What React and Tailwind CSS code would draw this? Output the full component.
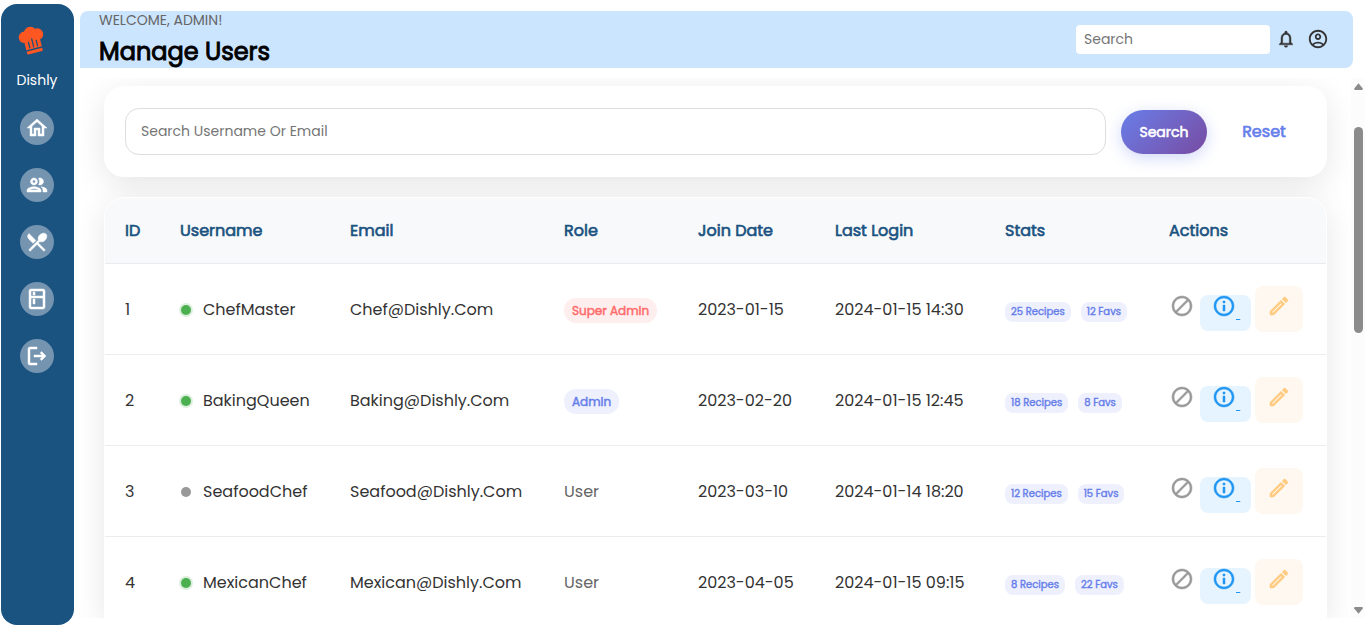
import React from "react";
import {
  MdOutlineHome,
  MdOutlineGroup,
  MdRestaurantMenu,
  MdOutlineKitchen,
  MdNotificationsNone,
  MdOutlineAccountCircle,
  MdBlock,
  MdInfoOutline,
  MdOutlineEdit,
} from "react-icons/md";

function LogoutIcon({ className }) {
  return (
    <svg viewBox="0 0 24 24" fill="currentColor" stroke="currentColor" strokeWidth="0.5" className={className} aria-hidden="true">
      <path d="M5 21Q3 21 3 19V5Q3 3 5 3H12V5H5V19H12V21ZM16.6 16.4 15.2 15 17.2 13H9V11H17.2L15.2 9 16.6 7.6 21 12Z" />
    </svg>
  );
}

const NAV = [
  { label: "Home", Icon: MdOutlineHome },
  { label: "Users", Icon: MdOutlineGroup },
  { label: "Recipes", Icon: MdRestaurantMenu },
  { label: "Pantry", Icon: MdOutlineKitchen },
  { label: "Log out", Icon: LogoutIcon },
];

const USERS = [
  { id: 1, name: "ChefMaster", email: "Chef@Dishly.Com", role: "Super Admin", joined: "2023-01-15", login: "2024-01-15 14:30", recipes: 25, favs: 12, online: true },
  { id: 2, name: "BakingQueen", email: "Baking@Dishly.Com", role: "Admin", joined: "2023-02-20", login: "2024-01-15 12:45", recipes: 18, favs: 8, online: true },
  { id: 3, name: "SeafoodChef", email: "Seafood@Dishly.Com", role: "User", joined: "2023-03-10", login: "2024-01-14 18:20", recipes: 12, favs: 15, online: false },
  { id: 4, name: "MexicanChef", email: "Mexican@Dishly.Com", role: "User", joined: "2023-04-05", login: "2024-01-15 09:15", recipes: 8, favs: 22, online: true },
];

const COLUMNS = [
  { title: "ID", width: "w-[55px]" },
  { title: "Username", width: "w-[170px]" },
  { title: "Email", width: "w-[214px]" },
  { title: "Role", width: "w-[134px]" },
  { title: "Join Date", width: "w-[137px]" },
  { title: "Last Login", width: "w-[170px]" },
  { title: "Stats", width: "w-[164px]" },
  { title: "Actions", width: "w-[177px]" },
];

// Emphasis is drawn as a thin outline around the regular weight.
const STRONG = "font-normal [-webkit-text-stroke:0.04em_currentColor]";

// Thickens a Material icon, leaving out its empty bounding path.
const BOLD_ICON = "stroke-[0.5] [&>path[fill=none]]:stroke-none";

const ROLE_STYLES = {
  "Super Admin": `mt-0.5 inline-block rounded-xl bg-[#ffeeee] px-2 text-xs leading-[25px] text-[#ff6b6b] ${STRONG}`,
  Admin: `mt-0.5 inline-block rounded-xl bg-[#eef0fd] px-2 text-xs leading-[25px] text-[#667eea] ${STRONG}`,
  User: "text-[#666]",
};

function ChefHat() {
  return (
    <svg viewBox="0 0 32 32" className="size-8" aria-hidden="true">
      <g transform="rotate(-14 16 16)">
        <path
          fill="#ff5722"
          d="M8 24.5V17.2A5.9 5.9 0 0 1 3.6 11.6A5.8 5.8 0 0 1 10.3 5.9A6.6 6.6 0 0 1 21.7 5.9A5.8 5.8 0 0 1 28.4 11.6A5.9 5.9 0 0 1 24 17.2V24.5Z"
        />
        <path fill="#ff5722" d="M8 26H24V28.2Q24 29.2 23 29.2H9Q8 29.2 8 28.2Z" />
        <path stroke="#1a5280" strokeWidth="1.3" strokeLinecap="round" d="M12 17.5V23M16 14.8V23M20 17.5V23" />
      </g>
    </svg>
  );
}

function Sidebar() {
  return (
    <aside className="mt-1 mb-1.5 ml-px flex w-[73px] shrink-0 flex-col items-center rounded-2xl bg-[#1a5280] pt-5 pr-px">
      <a href="#dishly" className="flex flex-col items-center">
        <span className="-ml-2.5">
          <ChefHat />
        </span>
        <span className="mt-3 text-sm leading-6 text-white">Dishly</span>
      </a>
      <nav className="mt-[19px] flex flex-col gap-[23px]">
        {NAV.map(({ label, Icon }) => (
          <a
            key={label}
            href="#nav"
            aria-label={label}
            className="flex size-[34px] items-center justify-center rounded-full bg-[#7494b0] text-white"
          >
            <Icon className={`size-6 ${BOLD_ICON}`} />
          </a>
        ))}
      </nav>
    </aside>
  );
}

function Header() {
  return (
    <header className="mt-[11px] mr-3 flex h-[57px] shrink-0 items-center justify-between rounded-lg rounded-bl-none bg-[#cce5ff] pr-6 pl-[19px]">
      <div className="flex flex-col self-start">
        <p className="text-sm leading-[18px] text-[#666]">WELCOME, ADMIN!</p>
        <h1 className={`text-2xl leading-[46px] text-black ${STRONG}`}>Manage Users</h1>
      </div>
      <div className="flex items-center gap-1.5 pb-px">
        <input
          type="search"
          aria-label="Search"
          placeholder="Search"
          className="h-[29px] w-[194px] rounded bg-white px-2 text-sm text-[#333] outline-none placeholder:text-[#757575]"
        />
        <button type="button" aria-label="Notifications" className="text-[#333]">
          <MdNotificationsNone className={`size-5 ${BOLD_ICON}`} />
        </button>
        <button type="button" aria-label="Account" className="ml-[5px] text-[#333]">
          <MdOutlineAccountCircle className="size-[22px]" />
        </button>
      </div>
    </header>
  );
}

function SearchCard() {
  return (
    <form
      className="flex items-center gap-[15px] rounded-[20px] bg-white px-[21px] py-[22px] shadow-[0_8px_32px_rgba(0,0,0,0.1)]"
      onSubmit={(event) => event.preventDefault()}
    >
      <input
        type="text"
        aria-label="Search username or email"
        placeholder="Search Username Or Email"
        className="h-[47px] min-w-0 flex-1 rounded-[14px] border border-[#ddd] bg-white px-[15px] text-sm text-[#333] outline-none placeholder:text-[#757575]"
      />
      <button
        type="submit"
        className={`h-11 w-[86px] rounded-full bg-linear-135 from-[#667eea] to-[#764ba2] text-sm text-white shadow-[0_4px_15px_rgba(102,126,234,0.3)] ${STRONG}`}
      >
        Search
      </button>
      <a href="#reset" className={`w-[84px] text-center text-base text-[#667eea] ${STRONG}`}>
        Reset
      </a>
    </form>
  );
}

function UserRow({ user }) {
  const chip = `rounded-lg bg-[#eef0fd] px-1.5 text-[10px] leading-5 whitespace-nowrap text-[#667eea] ${STRONG}`;
  const cell = "pt-0.5 pl-5";
  return (
    <tr className="h-[91px] border-b border-[#ececec] whitespace-nowrap">
      <td className={cell}>{user.id}</td>
      <td className={cell}>
        <span className="flex items-center gap-3">
          <span
            className={
              user.online
                ? "ml-px size-2.5 rounded-full bg-[#4caf50] shadow-[0_0_0_2px_rgba(76,175,80,0.2)]"
                : "ml-px size-2.5 rounded-full bg-[#999]"
            }
          />
          {user.name}
        </span>
      </td>
      <td className={cell}>{user.email}</td>
      <td className={cell}>
        <span className={ROLE_STYLES[user.role]}>{user.role}</span>
      </td>
      <td className={cell}>{user.joined}</td>
      <td className={cell}>{user.login}</td>
      <td className="pt-1.5 pl-5">
        <span className="flex gap-2.5">
          <span className={chip}>{user.recipes} Recipes</span>
          <span className={chip}>{user.favs} Favs</span>
        </span>
      </td>
      <td className="pl-5">
        <div className="flex items-start gap-1">
          <button type="button" aria-label={`Block ${user.name}`} className="mt-2 mr-0.5 flex w-[25px] justify-center text-[#999]">
            <MdBlock className={`size-6 ${BOLD_ICON}`} />
          </button>
          <a
            href="#details"
            aria-label={`Details of ${user.name}`}
            className="mt-[9px] flex h-9 items-start rounded-lg bg-[#e6f4ff] pr-[11px] pl-3 text-[#2196f3]"
          >
            <MdInfoOutline className={`-mt-px size-6 ${BOLD_ICON}`} />
            <span className="leading-9 whitespace-pre underline"> </span>
          </a>
          <button
            type="button"
            aria-label={`Edit ${user.name}`}
            className="flex h-[46px] w-12 items-start justify-center rounded-lg bg-[#fff8f0] pt-2 text-[#ffcb80]"
          >
            <MdOutlineEdit className={`size-6 ${BOLD_ICON}`} />
          </button>
        </div>
      </td>
    </tr>
  );
}

function UsersTable() {
  return (
    <div className="overflow-hidden rounded-t-[20px] border border-white bg-white shadow-[0_8px_32px_rgba(0,0,0,0.1)]">
      <table className="w-full table-fixed border-collapse text-left text-base text-[#333]">
        <thead>
          <tr className="h-[65px] border-b border-[#e9ecef] bg-[#f8f9fb] text-[#1a5280]">
            {COLUMNS.map(({ title, width }) => (
              <th key={title} scope="col" className={`${width} pt-0.5 pl-5 ${STRONG}`}>
                {title}
              </th>
            ))}
          </tr>
        </thead>
        <tbody>
          {USERS.map((user) => (
            <UserRow key={user.id} user={user} />
          ))}
        </tbody>
      </table>
    </div>
  );
}

function ScrollTrack() {
  return (
    <div className="flex w-3.5 shrink-0 flex-col items-center bg-[#fcfcfc] pt-[5px] pb-1" aria-hidden="true">
      <svg viewBox="0 0 9 7" className="h-[7px] w-[9px] fill-[#8b8b8b]">
        <path d="M4.5 0.3 8.8 5.6Q9 7 8 7H1Q0 7 0.2 5.6Z" />
      </svg>
      <div className="mt-[37px] h-[206px] w-[9px] rounded-full bg-[#8b8b8b]" />
      <svg viewBox="0 0 9 7" className="mt-auto h-[7px] w-[9px] fill-[#8b8b8b]">
        <path d="M4.5 6.7 8.8 1.4Q9 0 8 0H1Q0 0 0.2 1.4Z" />
      </svg>
    </div>
  );
}

export default function App() {
  return (
    <div className="flex h-screen overflow-hidden bg-white font-['Poppins','Inter',sans-serif]">
      <Sidebar />
      <div className="ml-1.5 flex min-w-0 flex-1 flex-col">
        <Header />
        <div className="mt-2.5 mb-[13px] flex min-h-0 flex-1">
          <main className="flex min-w-0 flex-1 flex-col gap-5 overflow-hidden pt-2 pr-6 pl-6">
            <SearchCard />
            <UsersTable />
          </main>
          <ScrollTrack />
        </div>
      </div>
    </div>
  );
}
